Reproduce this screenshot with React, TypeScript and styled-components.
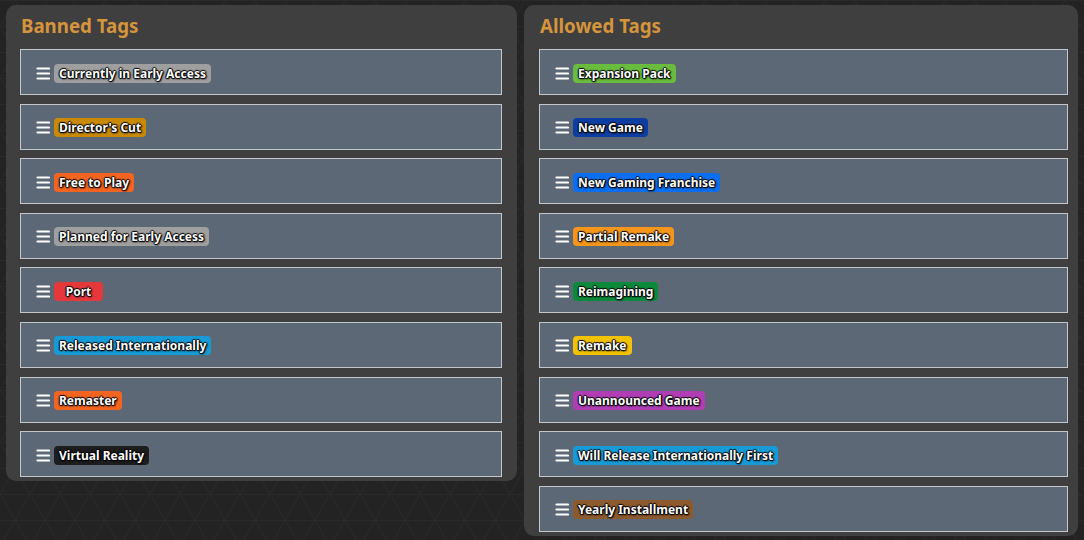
import styled, { createGlobalStyle } from "styled-components";

const pattern = encodeURIComponent(
  `<svg xmlns="http://www.w3.org/2000/svg" width="60" height="52"><g stroke="#2a2a2a" stroke-width="1" fill="none"><path d="M0 0.5H60M0 26.5H60"/><path d="M15 0L0 26M15 0L30 26M45 0L30 26M45 0L60 26M0 26L15 52M30 26L15 52M30 26L45 52M60 26L45 52"/></g></svg>`
);

const GlobalStyle = createGlobalStyle`
  html, body {
    margin: 0;
    padding: 0;
    background-color: #232323;
    background-image: url("data:image/svg+xml,${pattern}");
    font-family: "Noto Sans", "Open Sans", sans-serif;
    overflow: hidden;
  }
`;

const Page = styled.div`
  display: grid;
  grid-template-columns: 511px 554px;
  column-gap: 7px;
  align-items: start;
  padding: 5px 6px 0 6px;
`;

const Panel = styled.section<{ $right?: boolean }>`
  background-color: #3f3f3f;
  border-radius: 10px;
  padding: 0 ${(props) => (props.$right ? "10px" : "15px")} 4px
    ${(props) => (props.$right ? "15px" : "14px")};
`;

const Title = styled.h2`
  margin: 0;
  height: 44px;
  line-height: 41px;
  padding-left: 1px;
  font-size: 18.7px;
  font-weight: 700;
  color: #d6943c;
`;

const List = styled.div`
  display: flex;
  flex-direction: column;
  gap: 8.6px;
`;

const Row = styled.div`
  box-sizing: border-box;
  height: 46px;
  display: flex;
  align-items: center;
  gap: 4px;
  padding: 2px 0 0 15px;
  background-color: #5c6876;
  border: 1px solid #c4c7cb;
`;

const Handle = styled.svg`
  width: 14px;
  height: 13px;
  flex-shrink: 0;
`;

const Tag = styled.span<{ $color: string }>`
  display: inline-block;
  min-width: 39px;
  text-align: center;
  padding: 0 5px;
  height: 19px;
  line-height: 19px;
  border-radius: 4px;
  background-color: ${(props) => props.$color};
  color: #ffffff;
  font-size: 12px;
  font-weight: 700;
  white-space: nowrap;
  text-shadow: 1px 0 1px #000, -1px 0 1px #000, 0 1px 1px #000, 0 -1px 1px #000,
    1px 1px 2px #000;
`;

type TagItem = { name: string; color: string };

const banned: TagItem[] = [
  { name: "Currently in Early Access", color: "#9f9f9f" },
  { name: "Director's Cut", color: "#c98900" },
  { name: "Free to Play", color: "#f2641f" },
  { name: "Planned for Early Access", color: "#9f9f9f" },
  { name: "Port", color: "#e5383a" },
  { name: "Released Internationally", color: "#179bd7" },
  { name: "Remaster", color: "#f2641f" },
  { name: "Virtual Reality", color: "#1d1d1d" },
];

const allowed: TagItem[] = [
  { name: "Expansion Pack", color: "#6abc3f" },
  { name: "New Game", color: "#0b3ea0" },
  { name: "New Gaming Franchise", color: "#0a6ef0" },
  { name: "Partial Remake", color: "#f5961b" },
  { name: "Reimagining", color: "#0b8a3b" },
  { name: "Remake", color: "#f3c200" },
  { name: "Unannounced Game", color: "#b03db4" },
  { name: "Will Release Internationally First", color: "#179bd7" },
  { name: "Yearly Installment", color: "#8c5a2c" },
];

function MenuIcon() {
  return (
    <Handle viewBox="0 0 14 13">
      <g stroke="#ffffff" strokeWidth="2.2" strokeLinecap="round">
        <line x1="1.5" y1="1.5" x2="13" y2="1.5" />
        <line x1="1.5" y1="6.5" x2="13" y2="6.5" />
        <line x1="1.5" y1="11.5" x2="13" y2="11.5" />
      </g>
    </Handle>
  );
}

function TagList({ items }: { items: TagItem[] }) {
  return (
    <List>
      {items.map((item) => (
        <Row key={item.name}>
          <MenuIcon />
          <Tag $color={item.color}>{item.name}</Tag>
        </Row>
      ))}
    </List>
  );
}

export default function App() {
  return (
    <>
      <GlobalStyle />
      <Page>
        <Panel>
          <Title>Banned Tags</Title>
          <TagList items={banned} />
        </Panel>
        <Panel $right>
          <Title>Allowed Tags</Title>
          <TagList items={allowed} />
        </Panel>
      </Page>
    </>
  );
}
